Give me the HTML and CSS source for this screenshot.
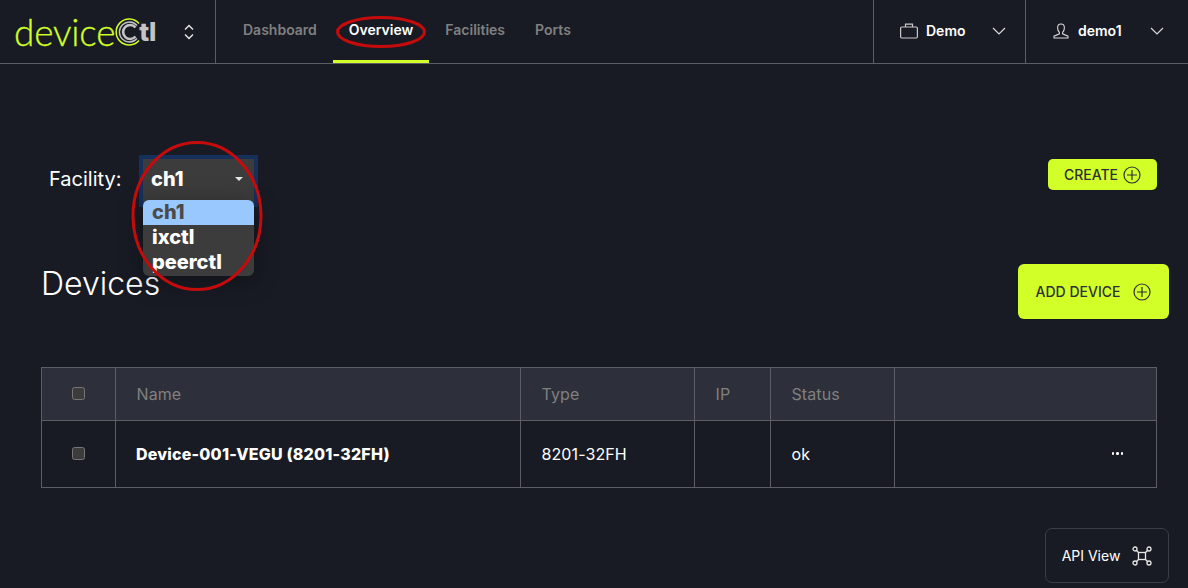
FILE: index.html
```html
<!DOCTYPE html>
<html lang="en">
<head>
<meta charset="utf-8">
<title>deviceCtl</title>
<link rel="stylesheet" href="styles.css">
</head>
<body>
<header class="topbar">
  <div class="brand">
    <div class="logo">
      <span class="logo-device">device</span>
      <svg class="logo-c" viewBox="0 0 28 28" width="28" height="28" fill="none" stroke-linecap="butt">
        <path d="M24 5.500A13 13 0 1 0 24 22.500" stroke="#d1ff27" stroke-width="1.500"/>
        <path d="M22 7.500A10 10 0 1 0 22 20.500" stroke="#c4c4c4" stroke-width="1.400"/>
        <path d="M20.500 9.500A7 7 0 1 0 20.500 18.500" stroke="#c4c4c4" stroke-width="2.600"/>
      </svg>
      <span class="logo-tl">tl</span>
    </div>
    <svg class="updown" viewBox="0 0 10 16" width="10" height="16" fill="none" stroke="#e8e8e8" stroke-width="1.400">
      <path d="M1 5.500 5 1.500 9 5.500M1 10.500 5 14.500 9 10.500"/>
    </svg>
  </div>
  <nav class="nav">
    <a class="nav-item">Dashboard</a>
    <a class="nav-item nav-active">Overview</a>
    <a class="nav-item">Facilities</a>
    <a class="nav-item nav-ports">Ports</a>
  </nav>
  <div class="menu menu-org">
    <svg viewBox="0 0 18 16" width="18" height="16" fill="none" stroke="#c8c8c8" stroke-width="1.200">
      <rect x="0.600" y="4" width="16.800" height="11" rx="1.200"/>
      <path d="M5.500 4V1.200h7V4"/>
    </svg>
    <span class="menu-label">Demo</span>
    <svg class="chev" viewBox="0 0 14 8" width="14" height="8" fill="none" stroke="#d8d8d8" stroke-width="1.200"><path d="M1 1l6 6 6-6"/></svg>
  </div>
  <div class="menu menu-user">
    <svg viewBox="0 0 16 16" width="16" height="16" fill="none" stroke="#d8d8d8" stroke-width="1.100">
      <path d="M8 1C5.800 1 4.600 2.600 4.600 4.800c0 2 .8 3.600 1.800 4.600v1.400L1 13.200V15h14v-1.800l-5.400-2.400V9.400c1-1 1.800-2.600 1.800-4.600C11.400 2.600 10.200 1 8 1z"/>
    </svg>
    <span class="menu-label">demo1</span>
    <svg class="chev" viewBox="0 0 14 8" width="14" height="8" fill="none" stroke="#d8d8d8" stroke-width="1.200"><path d="M1 1l6 6 6-6"/></svg>
  </div>
</header>

<main class="page">
  <section class="facility-row">
    <div class="facility">
      <span class="facility-label">Facility:</span>
      <div class="select-wrap">
        <div class="select"><span>ch1</span><i class="caret"></i></div>
        <ul class="options">
          <li class="option option-on">ch1</li>
          <li class="option">ixctl</li>
          <li class="option">peerctl</li>
        </ul>
      </div>
    </div>
    <button class="btn btn-create">CREATE
      <svg viewBox="0 0 18 18" width="18" height="18" fill="none" stroke="#2f2f3a" stroke-width="1.200"><circle cx="9" cy="9" r="8"/><path d="M9 4v10M4 9h10"/></svg>
    </button>
  </section>

  <section class="title-row">
    <h1 class="title">Devices</h1>
    <button class="btn btn-add">ADD DEVICE
      <svg viewBox="0 0 18 18" width="18" height="18" fill="none" stroke="#2f2f3a" stroke-width="1.200"><circle cx="9" cy="9" r="8"/><path d="M9 4v10M4 9h10"/></svg>
    </button>
  </section>

  <table class="devices">
    <colgroup>
      <col class="c-check"><col class="c-name"><col class="c-type"><col class="c-ip"><col class="c-status"><col>
    </colgroup>
    <thead>
      <tr>
        <th class="cell-check"><span class="check"></span></th>
        <th>Name</th><th>Type</th><th>IP</th><th>Status</th><th></th>
      </tr>
    </thead>
    <tbody>
      <tr>
        <td class="cell-check"><span class="check"></span></td>
        <td class="device-name">Device-001-VEGU (8201-32FH)</td>
        <td>8201-32FH</td><td></td><td>ok</td>
        <td class="cell-more"><span class="more"><i></i><i></i><i></i></span></td>
      </tr>
    </tbody>
  </table>

  <div class="api-row">
    <button class="api-btn">API View
      <svg viewBox="0 0 20 20" width="20" height="20" fill="none" stroke="#e6e6e6" stroke-width="1.300">
        <rect x="6.500" y="6.500" width="7" height="7"/>
        <path d="M6.500 6.500 4 4M13.500 6.500 16 4M6.500 13.500 4 16M13.500 13.500 16 16"/>
        <circle cx="3" cy="3" r="2"/><circle cx="17" cy="3" r="2"/><circle cx="3" cy="17" r="2"/><circle cx="17" cy="17" r="2"/>
      </svg>
    </button>
  </div>
</main>

<svg class="annotation" width="1188" height="588" viewBox="0 0 1188 588" fill="none" stroke="#c50b0b" stroke-width="3">
  <ellipse cx="381" cy="32" rx="43.500" ry="14.500"/>
  <ellipse cx="197" cy="216" rx="64" ry="73.500"/>
</svg>
</body>
</html>
```
FILE: styles.css
```css
* { box-sizing: border-box; }
html, body { margin: 0; height: 100%; }
body {
  background: #181b24;
  color: #fff;
  font-family: Inter, "Liberation Sans", sans-serif;
  overflow: hidden;
  position: relative;
}
.topbar {
  display: flex;
  height: 64px;
  border-bottom: 1px solid #5c5d66;
}
.brand {
  width: 216px;
  flex: none;
  display: flex;
  align-items: center;
  padding-left: 14px;
  border-right: 1px solid #5c5d66;
}
.logo { display: flex; align-items: center; width: 170px; height: 63px; }
.logo-device {
  font-family: Lato, sans-serif;
  font-weight: 300;
  font-size: 37px;
  color: #d1ff27;
  letter-spacing: -0.2px;
  -webkit-text-stroke: 0.3px #d1ff27;
}
.logo-c { flex: none; }
.logo-tl {
  font-family: Inter, sans-serif;
  font-weight: 800;
  font-size: 26px;
  color: #c4c4c4;
  margin-left: -4px;
  letter-spacing: -0.5px;
}
.updown { flex: none; }
.nav { display: flex; flex: 1; padding-left: 11px; }
.nav-item {
  display: flex;
  align-items: center;
  height: 63px;
  padding: 0 16px 1px;
  font-size: 14px;
  font-weight: 600;
  color: #808080;
  border-bottom: 3px solid transparent;
}
.nav-active { color: #fff; border-bottom-color: #d1ff27; }
.nav-ports { margin-left: -2px; }
.menu {
  display: flex;
  align-items: center;
  height: 63px;
  padding-bottom: 2px;
  border-left: 1px solid #5c5d66;
  flex: none;
}
.menu-label { font-size: 14px; font-weight: 600; }
.menu-org { width: 152px; padding-left: 26px; }
.menu-org .menu-label { margin-left: 8px; width: 66px; }
.menu-user { width: 163px; padding-left: 27px; }
.menu-user .menu-label { margin-left: 9px; width: 72px; }

.page { padding: 91px 19px 0 41px; }
.facility-row {
  display: flex;
  justify-content: space-between;
  align-items: flex-start;
  height: 109px;
  padding-right: 12px;
  padding-top: 4px;
}
.facility { display: flex; align-items: flex-start; }
.facility-label {
  font-size: 20px;
  font-weight: 400;
  line-height: 24px;
  margin: 8px 0 0 8px;
  width: 94px;
}
.select-wrap { position: relative; width: 111px; }
.select {
  height: 44px;
  width: 111px;
  background: #3c3c3c;
  outline: 4px solid #16305c;
  display: flex;
  align-items: center;
  justify-content: space-between;
  padding: 0 11px 4px 8px;
  font-size: 20px;
  font-weight: 800;
}
.caret {
  width: 0; height: 0;
  border: 4px solid transparent;
  border-top-color: #e6e6e6;
  border-bottom: 0;
}
.options {
  position: absolute;
  top: 41px;
  left: 0;
  width: 111px;
  margin: 0;
  padding: 0 0 1px;
  list-style: none;
  background: #3c3c3c;
  border-radius: 6px;
  overflow: hidden;
  box-shadow: 0 4px 24px rgba(0, 0, 0, .35);
  z-index: 2;
}
.option {
  height: 25px;
  line-height: 25px;
  padding-left: 9px;
  font-size: 20px;
  font-weight: 800;
}
.option-on { background: #99c8ff; color: #4b4b4b; }
.btn {
  border: 0;
  background: #d1ff27;
  color: #2f2f3a;
  font-family: inherit;
  font-weight: 500;
  display: flex;
  align-items: center;
  padding: 0;
}
.btn-create {
  width: 109px;
  height: 31px;
  border-radius: 5px;
  justify-content: center;
  gap: 5px;
  font-size: 14px;
}
.title-row {
  display: flex;
  justify-content: space-between;
  align-items: flex-start;
  height: 103px;
}
.title {
  margin: 0;
  font-size: 32px;
  font-weight: 300;
  line-height: 40px;
}
.btn-add {
  width: 151px;
  height: 55px;
  border-radius: 6px;
  font-size: 14px;
  justify-content: center;
  gap: 13px;
}
.devices {
  width: 1116px;
  table-layout: fixed;
  border-collapse: collapse;
  font-size: 16px;
  letter-spacing: 0.1px;
}
.c-check { width: 74px; }
.c-name { width: 405px; }
.c-type { width: 174px; }
.c-ip { width: 76px; }
.c-status { width: 124px; }
.devices th, .devices td {
  border: 1px solid #5c5d66;
  padding: 0 20.500px;
  text-align: left;
}
.devices th {
  height: 53px;
  background: #2d2f3a;
  color: #808080;
  font-weight: 400;
}
.devices td { height: 67px; }
.devices .cell-check { padding: 0 0 4px; text-align: center; }
.check {
  display: inline-block;
  width: 13px;
  height: 13px;
  vertical-align: middle;
  background: #3c3c3c;
  border: 1px solid #767676;
  border-radius: 2.500px;
}
.devices .device-name { font-weight: 800; font-size: 16px; letter-spacing: 0.2px; padding-left: 20px; }
.devices .cell-more { text-align: right; padding-right: 33px; }
.more { display: inline-flex; gap: 2px; padding-bottom: 4px; vertical-align: middle; }
.more i { width: 2.500px; height: 2.500px; background: #fff; border-radius: 50%; }
.api-row { display: flex; justify-content: flex-end; margin-top: 40px; }
.api-btn {
  width: 124px;
  height: 55px;
  background: #181b24;
  border: 1px solid #3c3e46;
  border-radius: 7px;
  color: #fff;
  font-family: inherit;
  font-size: 14px;
  font-weight: 400;
  display: flex;
  align-items: center;
  justify-content: center;
  gap: 12px;
  padding: 0;
}
.annotation { position: absolute; left: 0; top: 0; pointer-events: none; z-index: 5; }
```
